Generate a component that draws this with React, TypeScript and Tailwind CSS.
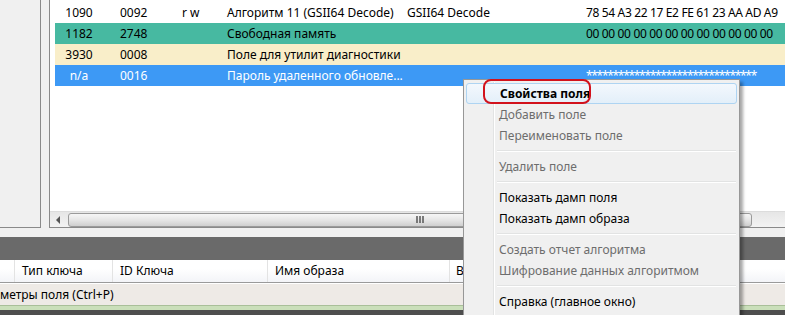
const rows = [
  { off: "1090", len: "0092", acc: "r w", name: "Алгоритм 11 (GSII64 Decode)", type: "GSII64 Decode", data: "78 54 A3 22 17 E2 FE 61 23 AA AD A9", cls: "bg-white text-black" },
  { off: "1182", len: "2748", acc: "", name: "Свободная память", type: "", data: "00 00 00 00 00 00 00 00 00 00 00 00", cls: "bg-[#47b9a1] text-black" },
  { off: "3930", len: "0008", acc: "", name: "Поле для утилит диагностики", type: "", data: "", cls: "bg-[#f9eec9] text-black" },
  { off: "n/a", len: "0016", acc: "", name: "Пароль удаленного обновле...", type: "", data: "********************************", cls: "bg-[#3d99f5] text-white" },
];

type Item = { label: string; disabled?: boolean; bold?: boolean } | "sep";

const menu: Item[] = [
  { label: "Свойства поля", bold: true },
  { label: "Добавить поле", disabled: true },
  { label: "Переименовать поле", disabled: true },
  "sep",
  { label: "Удалить поле", disabled: true },
  "sep",
  { label: "Показать дамп поля" },
  { label: "Показать дамп образа" },
  "sep",
  { label: "Создать отчет алгоритма", disabled: true },
  { label: "Шифрование данных алгоритмом", disabled: true },
  "sep",
  { label: "Справка (главное окно)" },
];

const ContextMenu = () => {
  return (
    <div className="absolute left-[463px] top-[79px] w-[277px] h-[260px] bg-[#f0f0f0] border border-[#979797] shadow-[3px_3px_3px_rgba(0,0,0,0.35)] pt-[3px] px-[2px]">
      <div className="absolute left-[29px] top-[2px] bottom-0 w-[2px] border-l border-[#e2e3e3] border-r border-r-white" />
      {menu.map((it, i) =>
        it === "sep" ? (
          <div key={i} className="h-[10px] flex items-center pl-[31px] pr-[1px]">
            <div className="w-full h-[2px] border-t border-[#e2e3e3] border-b border-b-white" />
          </div>
        ) : (
          <div
            key={i}
            className={
              "relative h-[21px] flex items-center pl-[33px] text-[12px] " +
              (i === 0 ? "rounded-[3px] border border-[#aed4f2] bg-gradient-to-b from-[#f3f8fd] to-[#e3eff9] " : "") +
              (it.disabled ? "text-[#6d6d6d] " : "text-black ") +
              (it.bold ? "font-bold " : "")
            }
          >
            {it.label}
          </div>
        )
      )}
      <div className="absolute left-[19px] top-[-1px] w-[108px] h-[25px] rounded-[8px] border-2 border-[#d2121c]" />
    </div>
  );
};

const App = () => {
  return (
    <div className="relative w-[785px] h-[315px] overflow-hidden bg-[#f0f0f0] text-[12px] leading-none" style={{ fontFamily: '"Noto Sans", "Open Sans", sans-serif' }}>
      <div className="flex h-[228px]">
        <div className="w-[41px] shrink-0 border-r border-b border-[#8a8a8a] bg-[#f0f0f0]" />
        <div className="w-[8px] shrink-0" />
        <div className="flex-1 flex flex-col bg-white border-l border-b border-[#8a8a8a] min-w-0">
          <div className="flex-1 pt-[2px] pl-[5px]">
            {rows.map((r) => (
              <div key={r.off} className={"flex h-[21px] items-center whitespace-nowrap " + r.cls}>
                <div className="w-[48px] shrink-0 text-center">{r.off}</div>
                <div className="w-[62px] shrink-0 pl-[17px]">{r.len}</div>
                <div className="w-[45px] shrink-0 pl-[17px]">{r.acc}</div>
                <div className="w-[180px] shrink-0 pl-[17px]">{r.name}</div>
                <div className="w-[180px] shrink-0 pl-[17px]">{r.type}</div>
                <div className={"flex-1 pl-[16px] " + (r.off === "n/a" ? "tracking-[-1.3px]" : "tracking-[-0.35px]")}>{r.data}</div>
              </div>
            ))}
          </div>
          <div className="h-[16px] flex items-center bg-gradient-to-b from-[#e6e6e6] to-[#f3f3f3] border-t border-[#dcdcdc]">
            <div className="w-[17px] flex items-center justify-center">
              <svg width="5" height="8" viewBox="0 0 5 8"><path d="M4 0 L0 4 L4 8 Z" fill="#555" /></svg>
            </div>
            <div className="ml-[1px] w-[684px] h-[14px] rounded-[3px] border border-[#9a9a9a] bg-gradient-to-b from-[#f6f6f6] via-[#e6e6e6] to-[#cfcfcf] flex items-center justify-center pl-[20px]">
              <svg width="9" height="7" viewBox="0 0 9 7">
                <path d="M1 0 V7 M4 0 V7 M7 0 V7" stroke="#555" strokeWidth="1.5" />
              </svg>
            </div>
          </div>
        </div>
      </div>
      <div className="h-[9px]" />
      <div className="h-[23px] bg-[#6a6a6a]" />
      <div className="h-[23px] flex bg-gradient-to-b from-white from-40% to-[#f3f4f8] border-b border-[#9a9a9a] items-center text-black">
        <div className="w-[15px] h-full border-r border-[#e3e3e3]" />
        <div className="w-[98px] h-full border-r border-[#e3e3e3] flex items-center pl-[7px]">Тип ключа</div>
        <div className="w-[155px] h-full border-r border-[#e3e3e3] flex items-center pl-[7px]">ID Ключа</div>
        <div className="w-[182px] h-full border-r border-[#e3e3e3] flex items-center pl-[7px]">Имя образа</div>
        <div className="flex-1 h-full flex items-center pl-[6px]">В</div>
      </div>
      <div className="h-[22px] flex items-center bg-[#eeeae6] border-t border-white text-black">метры поля (Ctrl+P)</div>
      <div className="h-[5px] bg-[#cadfba] border-t border-[#a9bf99]" />
      <div className="h-[5px] bg-[#4e4e4e]" />
      <ContextMenu />
    </div>
  );
};

export default App;
